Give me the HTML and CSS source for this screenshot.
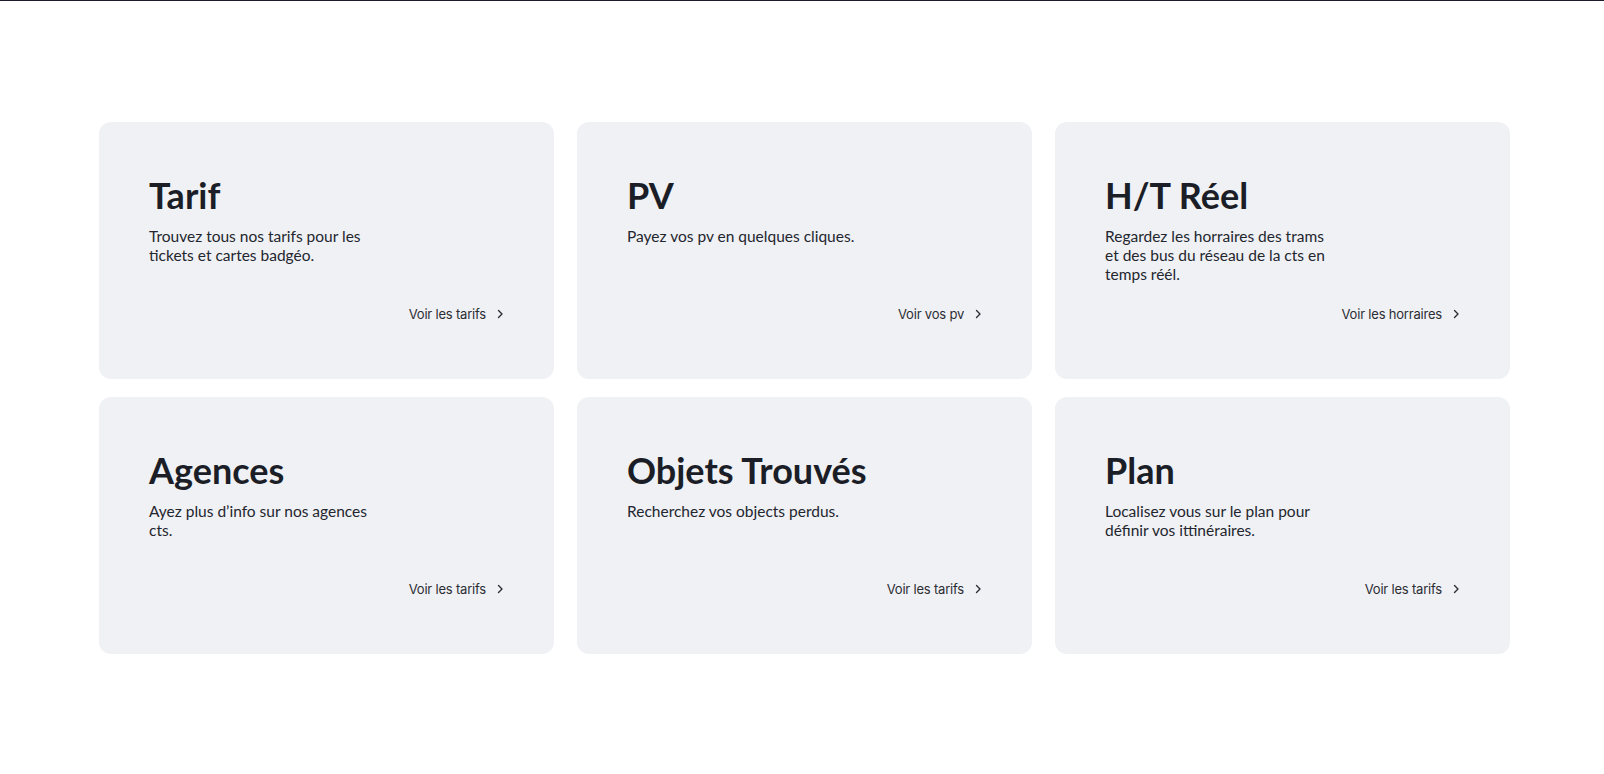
FILE: index.html
```html
<!DOCTYPE html>
<html lang="fr">
<head>
    <meta charset="UTF-8">
    <meta name="viewport" content="width=device-width, initial-scale=1.0">
    <title>Services CTS</title>
    <link rel="stylesheet" href="styles.css">
</head>
<body>
    <main class="services">
        <div class="card">
            <h2>Tarif</h2>
            <p>Trouvez tous nos tarifs pour les tickets et cartes badgéo.</p>
            <a class="more" href="#">Voir les tarifs
                <svg width="8" height="10" viewBox="0 0 8 10"><path d="M2.5 1.5 L6 5 L2.5 8.5"/></svg>
            </a>
        </div>
        <div class="card">
            <h2>PV</h2>
            <p>Payez vos pv en quelques cliques.</p>
            <a class="more" href="#">Voir vos pv
                <svg width="8" height="10" viewBox="0 0 8 10"><path d="M2.5 1.5 L6 5 L2.5 8.5"/></svg>
            </a>
        </div>
        <div class="card">
            <h2>H/T Réel</h2>
            <p>Regardez les horraires des trams et des bus du réseau de la cts en temps réél.</p>
            <a class="more" href="#">Voir les horraires
                <svg width="8" height="10" viewBox="0 0 8 10"><path d="M2.5 1.5 L6 5 L2.5 8.5"/></svg>
            </a>
        </div>
        <div class="card">
            <h2>Agences</h2>
            <p>Ayez plus d’info sur nos agences cts.</p>
            <a class="more" href="#">Voir les tarifs
                <svg width="8" height="10" viewBox="0 0 8 10"><path d="M2.5 1.5 L6 5 L2.5 8.5"/></svg>
            </a>
        </div>
        <div class="card">
            <h2>Objets Trouvés</h2>
            <p>Recherchez vos objects perdus.</p>
            <a class="more" href="#">Voir les tarifs
                <svg width="8" height="10" viewBox="0 0 8 10"><path d="M2.5 1.5 L6 5 L2.5 8.5"/></svg>
            </a>
        </div>
        <div class="card">
            <h2>Plan</h2>
            <p>Localisez vous sur le plan pour définir vos ittinéraires.</p>
            <a class="more" href="#">Voir les tarifs
                <svg width="8" height="10" viewBox="0 0 8 10"><path d="M2.5 1.5 L6 5 L2.5 8.5"/></svg>
            </a>
        </div>
    </main>
</body>
</html>
```

FILE: styles.css
```css
body {
    margin: 0;
    border-top: 1px solid #1b1c2b;
    background-color: #fff;
    font-family: Lato, "Open Sans", sans-serif;
}
.services {
    display: grid;
    grid-template-columns: repeat(3, 1fr);
    column-gap: 23px;
    row-gap: 18px;
    padding: 121px 94px 120px 99px;
}
.card {
    display: flex;
    flex-direction: column;
    height: 257px;
    box-sizing: border-box;
    padding: 52px 50px 55px 50px;
    background-color: #f0f1f5;
    border-radius: 12px;
}
.card h2 {
    margin: 0;
    font-size: 36px;
    line-height: 1.2;
    font-weight: 700;
    color: #1b1e27;
}
.card p {
    margin: 10px 0 0 0;
    max-width: 232px;
    font-size: 15.5px;
    line-height: 19px;
    color: #23262e;
}
.more {
    display: flex;
    align-items: center;
    gap: 10px;
    align-self: flex-end;
    margin-top: auto;
    font-family: Inter, sans-serif;
    font-size: 13px;
    letter-spacing: -0.2px;
    line-height: 20px;
    color: #2b2d33;
    text-decoration: none;
}
.more svg {
    fill: none;
    stroke: #2b2d33;
    stroke-width: 1.4;
    stroke-linecap: round;
    stroke-linejoin: round;
}
```
